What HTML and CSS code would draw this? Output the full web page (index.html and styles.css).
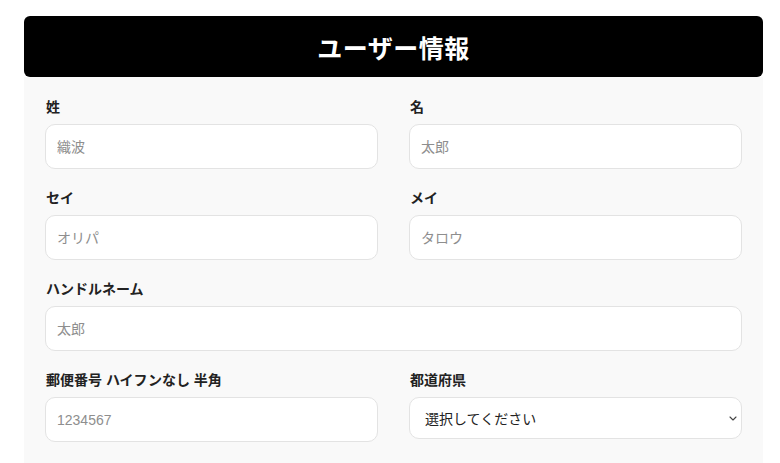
FILE: index.html
```html
<!DOCTYPE html>
<html lang="ja">
<head>
<meta charset="utf-8">
<link rel="stylesheet" href="styles.css">
</head>
<body>
<div class="page">
  <div class="header"><h1 class="title">ユーザー情報</h1></div>
  <form class="panel">
    <div class="grid">
      <div class="field">
        <label class="label">姓</label>
        <input class="input" type="text" placeholder="織波">
      </div>
      <div class="field">
        <label class="label">名</label>
        <input class="input" type="text" placeholder="太郎">
      </div>
      <div class="field">
        <label class="label">セイ</label>
        <input class="input" type="text" placeholder="オリパ">
      </div>
      <div class="field">
        <label class="label">メイ</label>
        <input class="input" type="text" placeholder="タロウ">
      </div>
      <div class="field wide">
        <label class="label">ハンドルネーム</label>
        <input class="input" type="text" placeholder="太郎">
      </div>
      <div class="field">
        <label class="label">郵便番号 ハイフンなし 半角</label>
        <input class="input" type="text" placeholder="1234567">
      </div>
      <div class="field">
        <label class="label">都道府県</label>
        <div class="select">
          <span class="select-text">選択してください</span>
          <svg class="chev" width="8" height="5" viewBox="0 0 8 5"><path d="M1 1l3 3 3-3" fill="none" stroke="#444" stroke-width="1.1" stroke-linecap="round" stroke-linejoin="round"/></svg>
        </div>
      </div>
    </div>
  </form>
</div>
</body>
</html>
```
FILE: styles.css
```css
html, body {
  margin: 0;
  padding: 0;
  background: #ffffff;
}
body {
  font-family: Arial, "Liberation Sans", "Noto Sans CJK JP", sans-serif;
  color: #222;
}
.page {
  width: 739px;
  margin: 16px 0 0 24px;
}
.header {
  background: #000;
  border-radius: 6px;
  height: 61px;
  display: flex;
  align-items: center;
  justify-content: center;
}
.title {
  margin: 0;
  color: #fff;
  font-size: 25px;
  font-weight: 700;
  letter-spacing: 0.5px;
  font-family: "Noto Sans CJK JP", sans-serif;
}
.panel {
  background: #f9f9f9;
  padding: 21px 21px 40px;
  margin: 0;
}
.grid {
  display: grid;
  grid-template-columns: 333px 333px;
  column-gap: 31px;
  row-gap: 20px;
}
.wide {
  grid-column: 1 / 3;
}
.field {
  display: flex;
  flex-direction: column;
}
.label {
  font-size: 14px;
  font-weight: 700;
  line-height: 18px;
  color: #222;
  margin-bottom: 8px;
  padding-left: 1px;
}
.input {
  box-sizing: border-box;
  height: 45px;
  border: 1px solid #e3e3e3;
  border-radius: 10px;
  background: #fff;
  padding: 0 11px;
  font-size: 14px;
  font-family: Arial, "Liberation Sans", "Noto Sans CJK JP", sans-serif;
  color: #222;
  outline: none;
}
.input::placeholder {
  color: #8e8e8e;
}
.select {
  box-sizing: border-box;
  height: 42px;
  border: 1px solid #e3e3e3;
  border-radius: 10px;
  background: #fff;
  padding: 0 4px 0 15px;
  display: flex;
  align-items: center;
  justify-content: space-between;
}
.select-text {
  font-size: 14px;
  color: #222;
}
```
